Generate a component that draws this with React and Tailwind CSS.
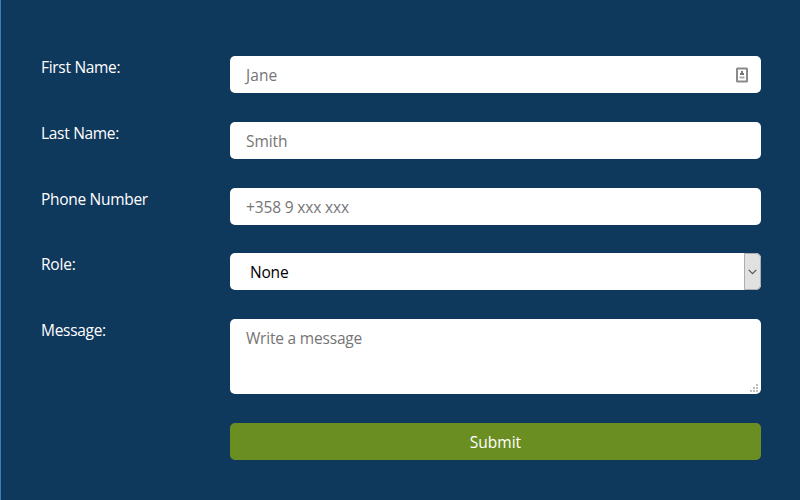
function Row({ label, spacing, children }) {
  return (
    <div className="flex items-start">
      <label className={`w-[189px] shrink-0 text-[15.5px] leading-[22px] text-white ${spacing}`}>{label}</label>
      {children}
    </div>
  );
}

function Field({ children }) {
  return (
    <div className="flex h-[37px] w-[531px] items-center rounded-[5px] bg-white pl-4 leading-[22px] text-[#757575]">
      {children}
    </div>
  );
}

function ContactIcon() {
  return (
    <svg className="mr-[13px] ml-auto" width="12" height="16" viewBox="0 0 12 16" fill="none">
      <rect x="1" y="1.5" width="10" height="13" rx="0.5" stroke="#8a8a8a" strokeWidth="2" />
      <path d="M5 4h2v2h1v2H4V6h1z" fill="#777" />
      <path d="M3.5 9.5h5v2h-5z" fill="#aaa" />
    </svg>
  );
}

export default function App() {
  return (
    <main className="h-[500px] w-[800px] overflow-hidden border-l border-[#3c80b8] bg-[#0f385d] pt-14 pl-10 font-['Open_Sans','Noto_Sans',sans-serif] text-[15.5px]">
      <form className="flex flex-col gap-[29px]">
        <Row label="First Name:" spacing="tracking-[-0.3px]">
          <Field>
            <span className="tracking-[0.1px]">Jane</span>
            <ContactIcon />
          </Field>
        </Row>
        <Row label="Last Name:" spacing="tracking-[-0.3px]">
          <Field><span className="tracking-[-0.1px]">Smith</span></Field>
        </Row>
        <Row label="Phone Number" spacing="tracking-[-0.3px]">
          <Field><span className="tracking-[-0.15px]">+358 9 xxx xxx</span></Field>
        </Row>
        <div className="-mt-px">
          <Row label="Role:" spacing="tracking-[-0.2px]">
            <div className="flex h-[37px] w-[531px] items-center overflow-hidden rounded-[5px] bg-white pl-5 leading-[22px] text-black">
              <span className="tracking-[-0.2px]">None</span>
              <span className="ml-auto flex h-full w-[17px] items-center justify-center rounded-r-[5px] border border-[#adadad] bg-[#e1e1e1]">
                <svg width="9" height="6" viewBox="0 0 9 6" fill="none">
                  <path d="M0.7 0.8L4.5 4.6L8.3 0.8" stroke="#555" strokeWidth="1.2" />
                </svg>
              </span>
            </div>
          </Row>
        </div>
        <Row label="Message:" spacing="tracking-[-0.3px]">
          <div className="flex h-[75px] w-[531px] justify-between rounded-[5px] bg-white pt-2 pl-4 leading-[22px] text-[#757575]">
            <span className="tracking-[-0.2px]">Write a message</span>
            <svg className="mr-[3px] mb-[2px] self-end" width="8" height="8" viewBox="0 0 8 8" fill="#bfbfbf">
              <path d="M6 0h2v2H6zM3 3h2v2H3zM6 3h2v2H6zM0 6h2v2H0zM3 6h2v2H3zM6 6h2v2H6z" />
            </svg>
          </div>
        </Row>
        <button type="button" className="ml-[189px] h-[37px] w-[531px] rounded-[5px] bg-[#6b8e23] leading-[22px] text-white">
          Submit
        </button>
      </form>
    </main>
  );
}
